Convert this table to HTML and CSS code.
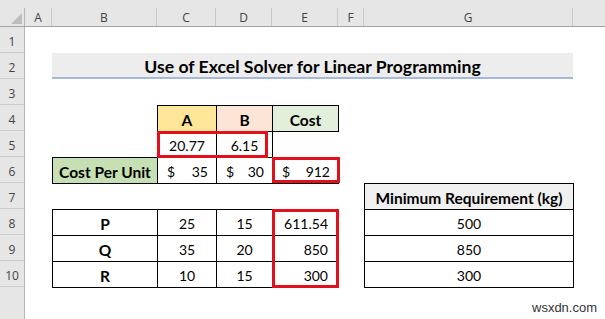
FILE: index.html
```html
<!DOCTYPE html>
<html>
<head>
<meta charset="utf-8">
<title>Excel Solver</title>
<link rel="stylesheet" href="styles.css">
</head>
<body>
<div class="sheet">
  <div class="corner r0 k0"><span><svg width="24" height="19" viewBox="0 0 24 19"><polygon points="11,16 22,16 22,5" fill="#bdbdbd"/></svg></span></div>
  <div class="ch r0 kA"><span>A</span></div>
  <div class="ch r0 kB"><span>B</span></div>
  <div class="ch r0 kC"><span>C</span></div>
  <div class="ch r0 kD"><span>D</span></div>
  <div class="ch r0 kE"><span>E</span></div>
  <div class="ch r0 kF"><span>F</span></div>
  <div class="ch r0 kG"><span>G</span></div>
  <div class="ch r0 kH"><span></span></div>

  <div class="rh r1 k0">1</div>
  <div class="rh r2 k0">2</div>
  <div class="rh r3 k0">3</div>
  <div class="rh r4 k0">4</div>
  <div class="rh r5 k0">5</div>
  <div class="rh r6 k0">6</div>
  <div class="rh r7 k0">7</div>
  <div class="rh r8 k0">8</div>
  <div class="rh r9 k0">9</div>
  <div class="rh r10 k0">10</div>
  <div class="rh last r11 k0"></div>

  <div class="title r2">Use of Excel Solver for Linear Programming</div>

  <div class="cell bx b yel r4 kC">A</div>
  <div class="cell bx b pch r4 kD">B</div>
  <div class="cell bx b grn r4 kE">Cost</div>

  <div class="cell bx r5 kC">20.77</div>
  <div class="cell bx r5 kD">6.15</div>

  <div class="cell bx b grn2 r6 kB">Cost Per Unit</div>
  <div class="cell bx acc r6 kC"><span>$</span><span>35</span></div>
  <div class="cell bx acc r6 kD"><span>$</span><span>30</span></div>
  <div class="cell bx acc r6 kE"><span>$</span><span>912</span></div>

  <div class="cell bx b gry r7 kG">Minimum Requirement (kg)</div>

  <div class="cell bx b r8 kB">P</div>
  <div class="cell bx r8 kC">25</div>
  <div class="cell bx r8 kD">15</div>
  <div class="cell bx num r8 kE">611.54</div>
  <div class="cell bx r8 kG">500</div>

  <div class="cell bx b r9 kB">Q</div>
  <div class="cell bx r9 kC">35</div>
  <div class="cell bx r9 kD">20</div>
  <div class="cell bx num r9 kE">850</div>
  <div class="cell bx r9 kG">850</div>

  <div class="cell bx b r10 kB">R</div>
  <div class="cell bx r10 kC">10</div>
  <div class="cell bx r10 kD">15</div>
  <div class="cell bx num r10 kE">300</div>
  <div class="cell bx r10 kG">300</div>

  <div class="sel sel1"></div>
  <div class="sel sel2"></div>
  <div class="sel sel3"></div>
</div>
<div class="wm">wsxdn.com</div>
</body>
</html>
```

FILE: styles.css
```css
* { box-sizing: border-box; margin: 0; padding: 0; }
html, body { background: #fff; }
body {
  width: 605px;
  height: 319px;
  overflow: hidden;
  position: relative;
  font-family: Lato, "Liberation Sans", sans-serif;
  color: #000;
}
.sheet {
  display: grid;
  grid-template-columns: 25px 27px 105px 59px 56px 66px 26px 209px 32px;
  grid-template-rows: 27px repeat(10, 26px) 32px;
  width: 605px;
  height: 319px;
}
.r0 { grid-row: 1; }
.r1 { grid-row: 2; }
.r2 { grid-row: 3; }
.r3 { grid-row: 4; }
.r4 { grid-row: 5; }
.r5 { grid-row: 6; }
.r6 { grid-row: 7; }
.r7 { grid-row: 8; }
.r8 { grid-row: 9; }
.r9 { grid-row: 10; }
.r10 { grid-row: 11; }
.r11 { grid-row: 12; }
.k0 { grid-column: 1; }
.kA { grid-column: 2; }
.kB { grid-column: 3; }
.kC { grid-column: 4; }
.kD { grid-column: 5; }
.kE { grid-column: 6; }
.kF { grid-column: 7; }
.kG { grid-column: 8; }
.kH { grid-column: 9; }

/* headers */
.ch, .corner {
  background: #e6e6e6;
  border-bottom: 1px solid #a3a3a3;
  padding-top: 8px;
  font-family: "Open Sans", "DejaVu Sans", sans-serif;
  font-size: 12px;
  color: #444;
}
.ch span, .corner span {
  display: flex;
  height: 100%;
  align-items: center;
  justify-content: center;
  border-right: 1px solid #c8c8c8;
}
.ch.kH span { border-right: none; }
.corner span { align-items: flex-start; border-right-color: #b5b5b5; }
.rh {
  background: #e6e6e6;
  border-right: 1px solid #b5b5b5;
  border-bottom: 1px solid #cbcbcb;
  display: flex;
  align-items: flex-end;
  justify-content: center;
  padding-bottom: 2px;
  font-family: "Open Sans", "DejaVu Sans", sans-serif;
  font-size: 12px;
  line-height: 16px;
  color: #444;
}
.rh.last { border-bottom: none; }

/* title */
.title {
  grid-column: 3 / 9;
  background: #ededed;
  border-bottom: 2px solid #a7b9da;
  display: flex;
  align-items: center;
  justify-content: center;
  padding-top: 2px;
  font-weight: 700;
  font-size: 17.6px;
}

/* cells */
.cell {
  display: flex;
  align-items: center;
  justify-content: center;
  font-size: 14px;
  padding-top: 2px;
}
.bx {
  border: 1px solid #000;
  margin: 0 -1px -1px 0;
}
.b { font-weight: 700; font-size: 15.5px; }
.yel { background: #ffe699; }
.pch { background: #fce4d6; }
.grn { background: #e2efda; }
.grn2 { background: #c6e0b4; }
.gry { background: #f0f0f0; }
.acc { justify-content: space-between; padding-left: 9px; padding-right: 8px; }
.num { justify-content: flex-end; padding-right: 10px; }

/* selection highlights */
.sel {
  border: 3px solid #e2101a;
  z-index: 2;
}
.sel1 { grid-row: 6; grid-column: 4 / 6; margin: 0 4px -1px 0; }
.sel2 { grid-row: 7; grid-column: 6; margin: 0 -2px 0 0; }
.sel3 { grid-row: 9 / 12; grid-column: 6; margin: 0 -1px -1px 0; }

/* watermark */
.wm {
  position: absolute;
  left: 532px;
  top: 300px;
  font-family: "Liberation Sans", Arial, sans-serif;
  font-size: 13px;
  color: #333;
}
```
